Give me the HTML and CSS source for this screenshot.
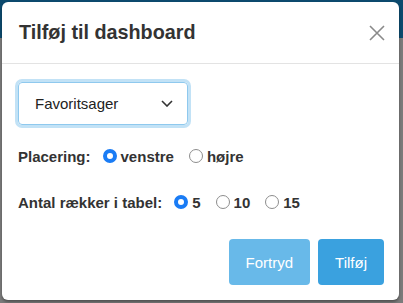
FILE: index.html
```html
<!DOCTYPE html>
<html lang="da">
  <head>
    <meta charset="utf-8" />
    <title>Tilføj til dashboard</title>
    <link rel="stylesheet" href="styles.css">
  </head>
  <body>
    <div class="modal">
      <header class="modalHeader">
        <h2>Tilføj til dashboard</h2>
        <button class="close" aria-label="Luk">
          <svg width="16" height="16" viewBox="0 0 16 16">
            <path d="M1 1L15 15M15 1L1 15" stroke="#8a8a8a" stroke-width="1.6" fill="none" />
          </svg>
        </button>
      </header>

      <form class="modalBody">
        <div class="select">
          <span>Favoritsager</span>
          <svg width="12" height="7" viewBox="0 0 12 7">
            <path d="M1 1L6 6L11 1" stroke="#333" stroke-width="1.6" fill="none" />
          </svg>
        </div>

        <div class="row first">
          <span class="label">Placering:</span>
          <label><input type="radio" name="place" checked /> venstre</label>
          <label><input type="radio" name="place" /> højre</label>
        </div>

        <div class="row second">
          <span class="label">Antal rækker i tabel:</span>
          <label><input type="radio" name="rows" checked /> 5</label>
          <label><input type="radio" name="rows" /> 10</label>
          <label><input type="radio" name="rows" /> 15</label>
        </div>
      </form>

      <footer class="modalFooter">
        <button class="btn light">Fortryd</button>
        <button class="btn primary">Tilføj</button>
      </footer>
    </div>
  </body>
</html>
```

FILE: styles.css
```css
html,
body {
  height: 100%;
  margin: 0;
}

body {
  font-family: 'Liberation Sans', Arial, sans-serif;
  color: #333;
  background: linear-gradient(#0c4a6e 0, #0c4a6e 38px, #7b7b7b 38px, #7b7b7b 100%);
  padding: 2px 4px 3px 2px;
  box-sizing: border-box;
  overflow: hidden;
}

.modal {
  height: 298px;
  background: #fff;
  border-radius: 6px;
  box-shadow: 0 2px 3px rgba(0, 0, 0, 0.35);
  display: flex;
  flex-direction: column;
}

.modalHeader {
  height: 61px;
  border-bottom: 1px solid #e3e3e3;
  display: flex;
  align-items: center;
  justify-content: space-between;
  padding: 0 14px 0 17px;
}

h2 {
  margin: 0;
  font-size: 19.8px;
  font-weight: 700;
  color: #333;
}

.close {
  border: none;
  background: none;
  padding: 0;
  width: 17px;
  height: 17px;
  display: flex;
  align-items: center;
  justify-content: center;
}

.modalBody {
  padding: 18px 16px 0;
  display: flex;
  flex-direction: column;
  align-items: flex-start;
}

.select {
  width: 170px;
  height: 43px;
  box-sizing: border-box;
  border: 1px solid #8fc9ee;
  border-radius: 4px;
  box-shadow: 0 0 0 3px #c2e2f6;
  display: flex;
  align-items: center;
  justify-content: space-between;
  padding: 0 14px 0 16px;
  font-size: 15px;
  color: #222;
}

.row {
  display: flex;
  align-items: center;
  height: 20px;
  font-size: 15px;
  font-weight: 700;
}

.row.first {
  margin-top: 21px;
}

.row.second {
  margin-top: 26px;
}

.label {
  margin-right: 12px;
}

.row label {
  display: flex;
  align-items: center;
  margin-right: 15px;
}

input[type='radio'] {
  appearance: none;
  margin: 0 4px 0 0;
  width: 14px;
  height: 14px;
  border: 1px solid #8d8d8d;
  border-radius: 50%;
  background: #fff;
  box-sizing: border-box;
}

input[type='radio']:checked {
  border: 4.5px solid #1a7cf5;
  background: #fff;
}

.modalFooter {
  margin-top: auto;
  display: flex;
  justify-content: flex-end;
  gap: 8px;
  padding: 0 15px 15px;
}

.btn {
  border: none;
  border-radius: 4px;
  height: 46px;
  padding: 0 17px;
  font-family: 'Liberation Sans', Arial, sans-serif;
  font-size: 15px;
  color: #fff;
}

.btn.light {
  background: #68b9e9;
}

.btn.primary {
  background: #3aa1df;
}
```
